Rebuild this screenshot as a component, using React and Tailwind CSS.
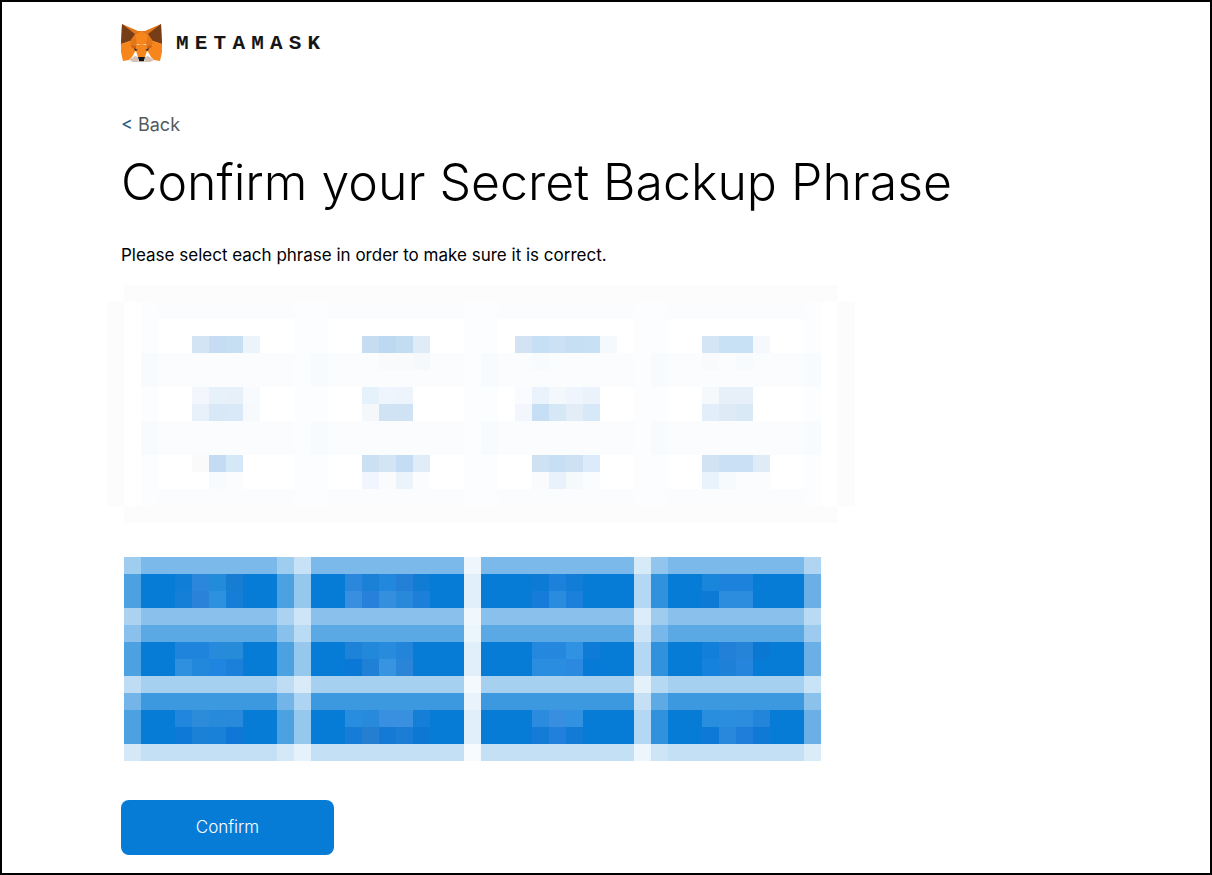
const FONT = "font-['Inter',sans-serif]";

function hex(n) {
  return n.toString(16).padStart(2, "0");
}

// ---------- lower (saturated) mosaic ----------
const LOW_ROWS = [0.534, 1, 1, 0.47, 0.66, 1, 1, 0.36, 0.78, 1, 1, 0.24];
const LOW_COLS = [
  0.72,
  ...Array(8).fill(1),
  0.72,
  0.42,
  ...Array(9).fill(1),
  0.12,
  ...Array(9).fill(1),
  0.3,
  0.83,
  ...Array(8).fill(1),
  0.6,
];
const LOW_START = 124;
const LOW_Y = [568, 585, 602, 619, 636, 653, 670, 687, 704, 721, 738, 755];
const LOW_WORDS = {
  585: { 175: "#107dd6", 192: "#2a87db", 209: "#228cdb", 226: "#167dd3", 345: "#2a87dc", 362: "#1a80d8", 379: "#2288de", 396: "#2480d6", 413: "#117cd3", 532: "#0d7bd6", 549: "#1c81db", 566: "#117dd6", 702: "#1a86db", 719: "#1c82db", 736: "#1c82db" },
  602: { 175: "#157fd8", 192: "#2a83d9", 209: "#2c92e0", 226: "#167ed6", 345: "#388fe0", 362: "#2581da", 379: "#3490df", 396: "#2888d9", 413: "#1c80db", 532: "#157dd9", 549: "#2a8cdf", 566: "#1a80da", 702: "#0d7bd6", 719: "#2c8cdd", 736: "#2c8cdd" },
  653: { 175: "#1f84db", 192: "#1f84db", 209: "#288ada", 226: "#268bd8", 345: "#1f82d9", 362: "#2288d9", 379: "#288bdb", 396: "#2285da", 532: "#2488df", 549: "#2587dd", 566: "#2f92e2", 583: "#0e7bd6", 702: "#1280da", 719: "#2280d8", 736: "#2584d8", 753: "#0a78d3" },
  670: { 175: "#2f90e0", 192: "#2288dc", 209: "#1f85e0", 226: "#1a80d9", 345: "#0a78d6", 362: "#2080d6", 379: "#3794e0", 396: "#2a85d8", 532: "#2b8de0", 549: "#2b8de0", 566: "#2b8ae0", 583: "#067ad6", 702: "#1583de", 719: "#1f80d8", 736: "#2585dc" },
  721: { 175: "#2187de", 192: "#2d8cda", 209: "#288adb", 226: "#298adb", 345: "#288cdf", 362: "#288adb", 379: "#3a90e0", 396: "#3890de", 413: "#157ed6", 532: "#2b8cdf", 549: "#388fdf", 566: "#3291e0", 702: "#2a8ede", 719: "#2c8ede", 736: "#2c8cde", 753: "#2385d9" },
  738: { 175: "#0e79d6", 192: "#1a81d6", 209: "#1a81d9", 226: "#0f78d6", 345: "#157dd8", 362: "#247fd0", 379: "#147ad6", 396: "#1b7dd6", 413: "#0c78d4", 532: "#147cd6", 549: "#2080dc", 566: "#127bd5", 702: "#0e79d6", 719: "#2a88dc", 736: "#1e7ed9", 753: "#1079d5" },
};

function lowColor(rowIndex, colIndex) {
  const y = LOW_Y[rowIndex];
  const x = LOW_START + colIndex * 17;
  const over = LOW_WORDS[y] && LOW_WORDS[y][x];
  if (over) return over;
  const a = LOW_ROWS[rowIndex] * LOW_COLS[colIndex];
  const mix = (c) => Math.round(255 + (c - 255) * a);
  return "#" + hex(mix(6)) + hex(mix(124)) + hex(mix(214));
}

// ---------- upper (faint) mosaic ----------
const UP_X0 = 107;
const UP_Y0 = 296;
const UP_COLS = 44;
const UP_ROWS = 14;
const UP_WORDS = {
  347: { 192: "#d3e5f5", 209: "#c5dcf3", 226: "#c7dff3", 243: "#ecf4fb", 362: "#c6dcf0", 379: "#bdd8f1", 396: "#c2dcf2", 413: "#dfecf7", 515: "#d3e3f4", 532: "#c7dff4", 549: "#cde1f5", 566: "#c6dff3", 583: "#c8e0f4", 600: "#f3f9fd", 702: "#d4e6f5", 719: "#c9e1f5", 736: "#c9e1f5", 753: "#f5f9fd" },
  364: { 379: "#f9fafc", 396: "#f9fafc", 413: "#f5f9fc", 532: "#f7fbfd", 702: "#f8fafb", 736: "#f8fbfd" },
  398: { 192: "#f3f6fc", 209: "#e6f1fa", 226: "#e7f0f9", 243: "#f8fbfe", 362: "#e6f2fb", 379: "#eef5fc", 396: "#eef4fb", 515: "#fafbfe", 532: "#eaf3fb", 549: "#f3f8fc", 566: "#eff5fc", 583: "#eaf3fb", 702: "#f5f9fc", 719: "#e7f0f9", 736: "#e7f0f9" },
  415: { 192: "#e8f0f9", 209: "#d9e8f6", 226: "#dae9f7", 243: "#f7fafd", 362: "#f4f8fb", 379: "#cfe3f4", 396: "#d0e3f4", 515: "#f3f7fd", 532: "#c7dff4", 549: "#d6e7f6", 566: "#e3edf7", 583: "#d7e9f8", 702: "#e2eef9", 719: "#deebf7", 736: "#dae9f6" },
  466: { 192: "#fafafa", 209: "#c3dcf3", 226: "#d5e8f7", 362: "#cbe1f3", 379: "#d3e4f5", 396: "#c4dcf4", 413: "#e0edf9", 532: "#cfe2f4", 549: "#c7dff4", 566: "#cde1f3", 583: "#dcebf9", 702: "#d2e4f4", 719: "#c9e0f5", 736: "#c9e0f5", 753: "#dfecf8" },
  483: { 209: "#f7fbfe", 226: "#fbfcfe", 362: "#f1f6fe", 379: "#f9fbfd", 396: "#ebf3fb", 413: "#fbfcfd", 532: "#fafbfd", 549: "#e9f1fb", 566: "#f5f9fc", 583: "#fbfcfd", 702: "#e8f3fc", 719: "#f6fafd", 736: "#fbfcfd", 753: "#fbfcfd" },
};
const BOXES = [[158, 294], [328, 464], [498, 634], [668, 804]];
const BOX_ROWS = [330, 347, 398, 415, 466, 483];

function upColor(r, c) {
  const x = UP_X0 + c * 17;
  const y = UP_Y0 + r * 17;
  const over = UP_WORDS[y] && UP_WORDS[y][x];
  if (over) return over;
  const topOrBottom = y === 296 || y === 517;
  if (topOrBottom) {
    return x === 107 || x === 838 ? "#ffffff" : "#fcfcfc";
  }
  if (x === 107 || x === 838) return "#fcfcfc";
  if (x === 124 || x === 821) return "#ffffff";
  if (BOX_ROWS.includes(y) && BOXES.some(([a, b]) => x >= a && x < b)) return "#ffffff";
  const gutter = x === 294 || x === 311 || x === 464 || x === 481 || x === 634 || x === 651;
  if ((y === 364 || y === 381 || y === 432 || y === 449) && (x === 141 || x === 311 || x === 481 || x === 651 || x === 804)) return "#f8fbfe";
  if (gutter || x === 141 || x === 804) return "#fcfdfe";
  return "#fbfcfe";
}

function Mosaic({ rows, cols, color, className }) {
  const cells = [];
  for (let r = 0; r < rows; r++) {
    for (let c = 0; c < cols; c++) {
      cells.push(<div key={r + "-" + c} style={{ backgroundColor: color(r, c) }} />);
    }
  }
  return <div className={className}>{cells}</div>;
}

function Fox() {
  return (
    <svg width="41" height="38" viewBox="0 0 41 38" className="shrink-0 block">
      <polygon points="1,0 17,7 24,7 40,0 41,20 32,17 27,20 14,20 9,17 0,20" fill="#e2761b" />
      <polygon points="14,11 20.5,7 27,11 25,20 16,20" fill="#f6851b" />
      <polygon points="1,0 14,10 9,17 0,20" fill="#763d16" />
      <polygon points="40,0 27,10 32,17 41,20" fill="#763d16" />
      <polygon points="0,20 9,17 15,21 15,26 11,33 8,36 2,37 0,28" fill="#f6851b" />
      <polygon points="41,20 32,17 26,21 26,26 30,33 33,36 39,37 41,28" fill="#f6851b" />
      <polygon points="15,21 20.5,20 26,21 26,27 24,33 17,33 15,27" fill="#f6851b" />
      <polygon points="9,17 16,20 15,22 10,21" fill="#e4761b" />
      <polygon points="32,17 25,20 26,22 31,21" fill="#e4761b" />
      <polygon points="10,21 15,22 15,25 11,24" fill="#cd6116" />
      <polygon points="31,21 26,22 26,25 30,24" fill="#cd6116" />
      <polygon points="13,24 17,26 14,27" fill="#233447" />
      <polygon points="28,24 24,26 27,27" fill="#233447" />
      <polygon points="8,36 14,32 17,33 17,38 12,38" fill="#d7c1b3" />
      <polygon points="33,36 27,32 24,33 24,38 29,38" fill="#d7c1b3" />
      <polygon points="17,33 24,33 23,37 18,37" fill="#161616" />
      <polygon points="18,37 23,37 24,38 17,38" fill="#c0ad9e" />
    </svg>
  );
}

export default function App() {
  return (
    <div className={`w-[1212px] h-[875px] overflow-hidden border-2 border-black bg-white ${FONT}`}>
      <div className="pl-[119px] flex flex-col items-start">
        <div className="flex items-center mt-[22px] h-[38px]">
          <Fox />
          <span className="ml-[14px] font-['Liberation_Mono',monospace] font-bold text-[21px] leading-none tracking-[6.2px] text-[#161616]">
            METAMASK
          </span>
        </div>
        <div className="mt-[51px] text-[18px] leading-[24px] text-[#535a61]">
          <span className="text-[#24577f]">&lt;</span> Back
        </div>
        <h1 className="mt-[11px] text-[50px] leading-[68px] font-light text-black whitespace-nowrap">
          Confirm your Secret Backup Phrase
        </h1>
        <p className="mt-[27px] text-[17px] leading-[24px] text-black whitespace-nowrap">
          Please select each phrase in order to make sure it is correct.
        </p>
        <Mosaic
          rows={UP_ROWS}
          cols={UP_COLS}
          color={upColor}
          className="mt-[18px] -ml-[14px] grid grid-cols-[repeat(44,17px)] auto-rows-[17px]"
        />
        <Mosaic
          rows={12}
          cols={41}
          color={lowColor}
          className="mt-[34px] ml-[3px] grid grid-cols-[repeat(41,17px)] auto-rows-[17px]"
        />
        <button className="mt-[39px] w-[213px] h-[55px] rounded-[8px] bg-[#067cd6] text-white text-[17px] font-light">
          Confirm
        </button>
      </div>
    </div>
  );
}
